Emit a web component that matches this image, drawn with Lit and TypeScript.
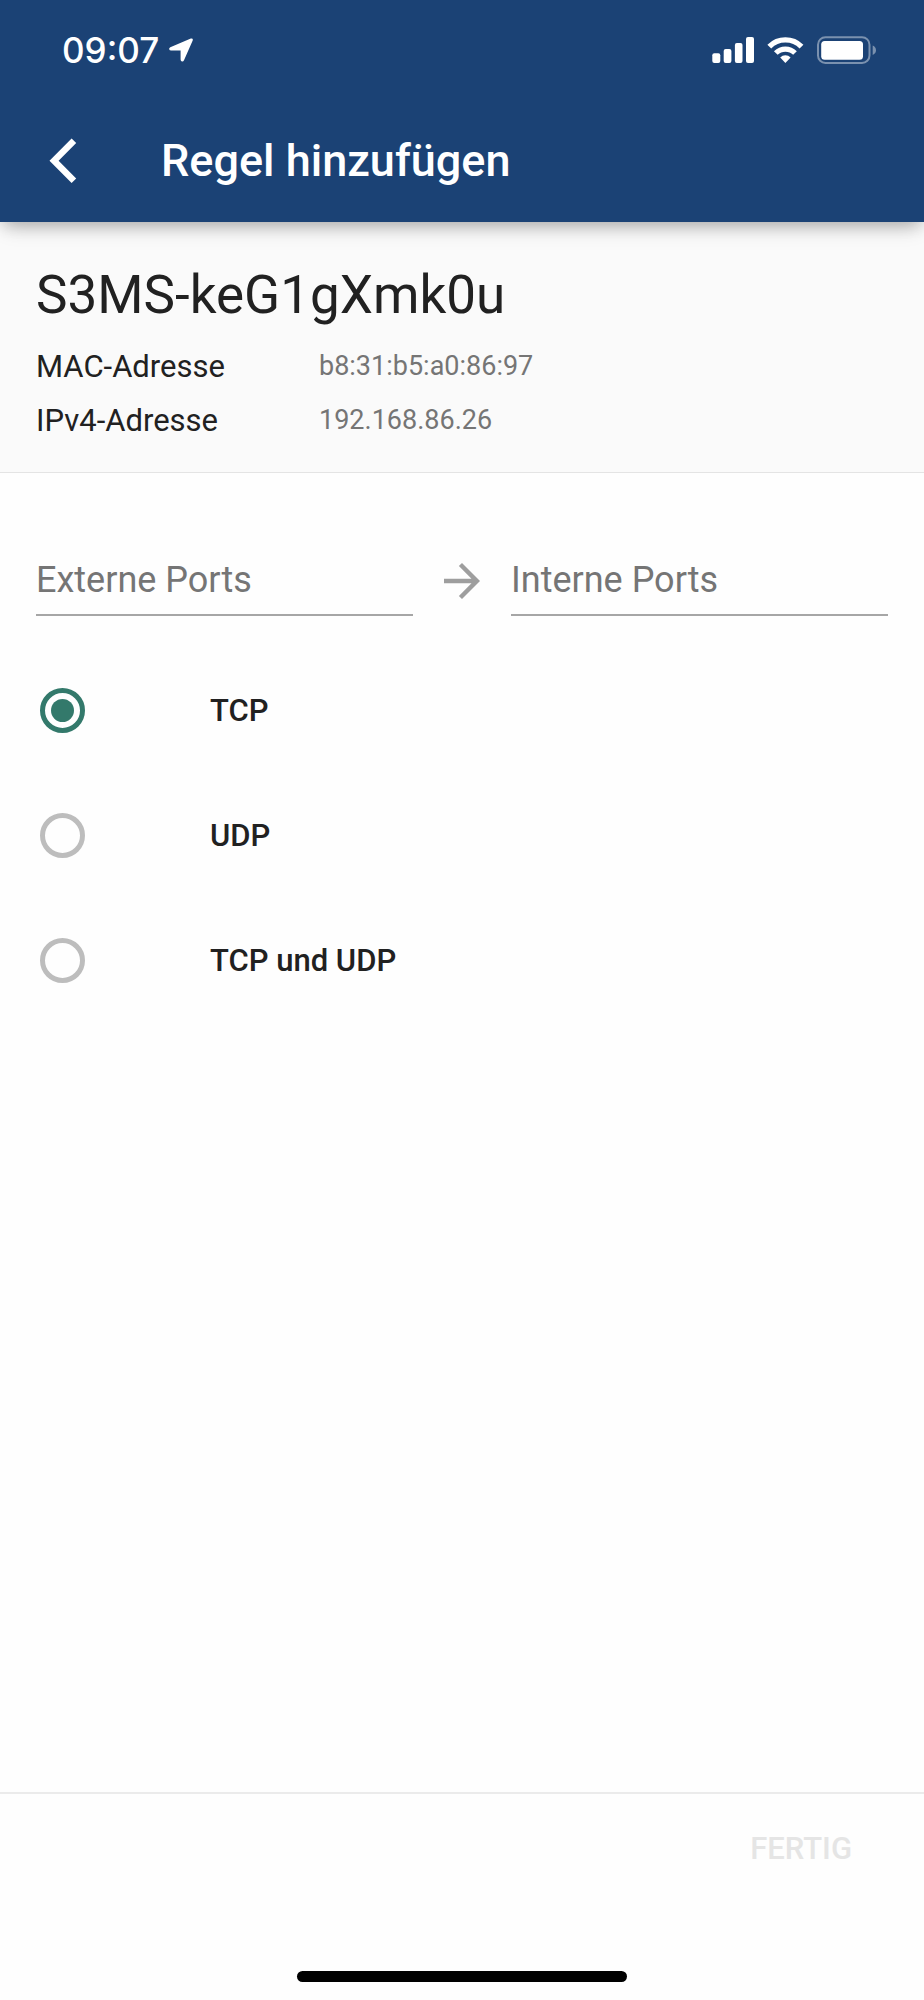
import { LitElement, html, css } from "lit";
import { customElement, state } from "lit/decorators.js";

const PROTOCOLS = [
  { value: "tcp", label: "TCP" },
  { value: "udp", label: "UDP" },
  { value: "both", label: "TCP und UDP" },
];

@customElement("status-bar")
class StatusBar extends LitElement {
  static styles = css`
    :host {
      display: flex;
      align-items: center;
      justify-content: space-between;
      height: 100px;
      padding: 0 48px 0 62px;
      color: #fff;
      font: 500 35px/40px Inter, sans-serif;
    }
    .clock {
      display: flex;
      align-items: center;
      gap: 10px;
    }
    svg {
      display: block;
      fill: currentColor;
    }
    .faded {
      opacity: 0.42;
    }
    .outline {
      fill: none;
      stroke: currentColor;
      stroke-width: 2;
    }
    .arc {
      fill: none;
      stroke: currentColor;
    }
  `;

  render() {
    return html`
      <div class="clock">
        <span>09:07</span>
        <svg width="24" height="24" viewBox="0 0 24 24" aria-hidden="true">
          <path d="M1.3 9.2 21.8.5Q24.3-.1 23.7 2.4L15 22.3Q14.3 23.8 12.9 23.5Q11.6 23.1 11.6 21.6V12.4H2.2Q.5 12.4.2 11.2Q0 9.9 1.3 9.2Z" />
        </svg>
      </div>
      <svg width="164" height="28" viewBox="0 0 164 28" aria-hidden="true">
        <rect x="0.3" y="17.3" width="8" height="9.7" rx="2" />
        <rect x="11.7" y="13" width="7.7" height="14" rx="2" />
        <rect x="22.9" y="7" width="7.6" height="20" rx="2" />
        <rect x="34" y="1" width="8" height="26" rx="2" />
        <path class="arc" stroke-width="5.4" d="M57.3 10.6A22.7 22.7 0 0 1 89.5 10.6" />
        <path class="arc" stroke-width="5.2" d="M63.8 17A13.6 13.6 0 0 1 83 17" />
        <path d="M73.4 27 68.2 21.4A7.3 7.3 0 0 1 78.6 21.4Z" />
        <rect class="outline faded" x="106" y="1.2" width="51.5" height="25.8" rx="7.5" />
        <rect x="109.2" y="5" width="41.8" height="18.8" rx="3.5" />
        <path class="faded" d="M160.7 9.5Q164 11 164 14.2Q164 17.4 160.7 18.9Z" />
      </svg>
    `;
  }
}

@customElement("app-root")
class AppRoot extends LitElement {
  static styles = css`
    :host {
      display: flex;
      flex-direction: column;
      min-height: 100vh;
      background: #fefefe;
      color: #212121;
      font-family: Roboto, sans-serif;
    }
    * {
      box-sizing: border-box;
    }
    .header {
      position: relative;
      background: #1b4275;
      color: #fff;
      box-shadow: 0 9px 18px -5px rgba(0, 0, 0, 0.28), 0 2px 16px rgba(0, 0, 0, 0.1);
    }
    .nav {
      display: flex;
      align-items: center;
      height: 122px;
      padding: 0 36px;
      gap: 71px;
    }
    button {
      border: 0;
      padding: 0;
      background: none;
      color: inherit;
      font: inherit;
    }
    .back {
      display: grid;
      place-items: center;
      width: 54px;
      height: 54px;
    }
    h1 {
      margin: 0;
      font-size: 45px;
      line-height: 54px;
      font-weight: 500;
    }
    .device {
      padding: 37px 36px 25px;
      background: #fafafa;
      border-bottom: 1px solid #e4e4e4;
    }
    h2 {
      margin: 0 0 8px;
      font-size: 53px;
      line-height: 72px;
      font-weight: 400;
    }
    dl {
      display: grid;
      grid-template-columns: 283px 1fr;
      align-items: center;
      grid-auto-rows: 54px;
      margin: 0;
    }
    dt {
      font-size: 31px;
    }
    dd {
      margin: 0;
      font-size: 27px;
      color: #757575;
    }
    .form {
      flex: 1;
      padding: 73px 36px;
    }
    .ports {
      display: flex;
      align-items: center;
      gap: 31px;
      margin-bottom: 32px;
    }
    .ports svg {
      flex: none;
    }
    .port {
      flex: 1;
      min-width: 0;
      height: 70px;
      padding: 0;
      border: 0;
      border-bottom: 2px solid #a6a6a6;
      border-radius: 0;
      outline: 0;
      background: none;
      color: inherit;
      font: 400 36px/48px Roboto, sans-serif;
    }
    .port::placeholder {
      color: #757575;
      opacity: 1;
    }
    fieldset {
      margin: 0;
      padding: 0;
      border: 0;
    }
    .option {
      display: flex;
      align-items: center;
      gap: 125px;
      height: 125px;
      padding-left: 4px;
      font-size: 31px;
      font-weight: 500;
    }
    .radio {
      appearance: none;
      display: grid;
      place-items: center;
      flex: none;
      width: 45px;
      height: 45px;
      margin: 0;
      border: 5px solid #bdbdbd;
      border-radius: 50%;
    }
    .radio:checked {
      border-color: #33796b;
    }
    .radio:checked::before {
      content: "";
      width: 23px;
      height: 23px;
      border-radius: 50%;
      background: #33796b;
    }
    .footer {
      display: flex;
      flex-direction: column;
      justify-content: space-between;
      height: 208px;
      padding: 28px 36px 18px;
      border-top: 2px solid #ebebeb;
    }
    .done {
      align-self: flex-end;
      padding: 0 36px;
      font-size: 31px;
      line-height: 54px;
      font-weight: 500;
      color: #e5e5e5;
    }
    .home {
      align-self: center;
      width: 330px;
      height: 11px;
      border-radius: 6px;
      background: #000;
    }
  `;

  @state() private protocol = "tcp";

  render() {
    return html`
      <header class="header">
        <status-bar></status-bar>
        <div class="nav">
          <button class="back" type="button" aria-label="Zurück">
            <svg width="28" height="46" viewBox="0 0 28 46" fill="#fff" aria-hidden="true">
              <path d="M22.6.5 27.2 5 9.6 22.7 27.2 40.4 22.6 45 .5 22.7Z" />
            </svg>
          </button>
          <h1>Regel hinzufügen</h1>
        </div>
      </header>
      <section class="device">
        <h2>S3MS-keG1gXmk0u</h2>
        <dl>
          <dt>MAC-Adresse</dt>
          <dd>b8:31:b5:a0:86:97</dd>
          <dt>IPv4-Adresse</dt>
          <dd>192.168.86.26</dd>
        </dl>
      </section>
      <main class="form">
        <div class="ports">
          <input class="port" aria-label="Externe Ports" placeholder="Externe Ports" />
          <svg width="36" height="36" viewBox="0 0 36 36" fill="#9e9e9e" aria-hidden="true">
            <path d="M18 0 14.9 3.1 27.5 15.7H0V20.3H27.5L14.9 32.9 18 36 36 18Z" />
          </svg>
          <input class="port" aria-label="Interne Ports" placeholder="Interne Ports" />
        </div>
        <fieldset aria-label="Protokoll">
          ${PROTOCOLS.map(
            ({ value, label }) => html`
              <label class="option">
                <input
                  class="radio"
                  type="radio"
                  name="protocol"
                  .value=${value}
                  .checked=${this.protocol === value}
                  @change=${() => (this.protocol = value)}
                />
                <span>${label}</span>
              </label>
            `
          )}
        </fieldset>
      </main>
      <footer class="footer">
        <button class="done" type="button" disabled>FERTIG</button>
        <div class="home"></div>
      </footer>
    `;
  }
}
